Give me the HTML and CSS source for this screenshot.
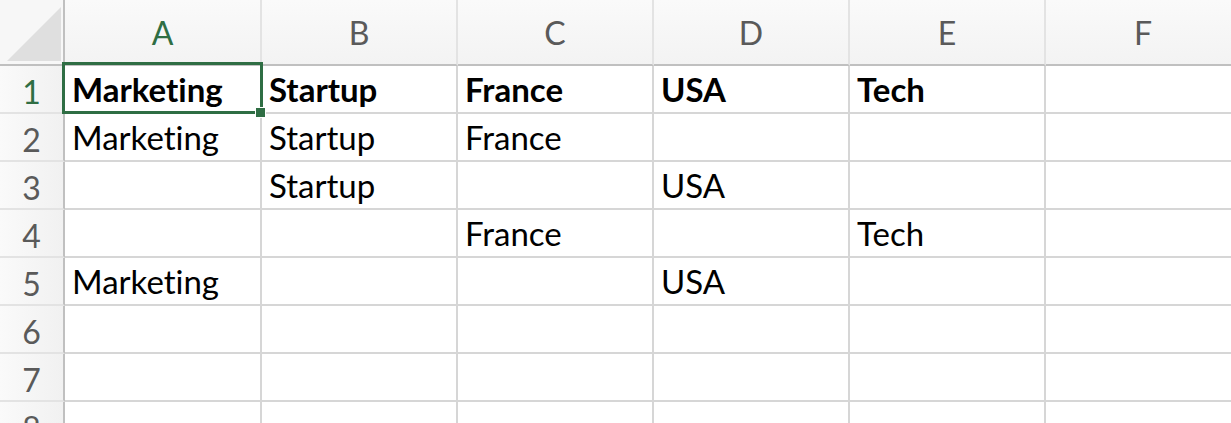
FILE: index.html
```html
<!DOCTYPE html>
<html lang="en">
<head>
<meta charset="utf-8">
<title>Sheet</title>
<link rel="stylesheet" href="styles.css">
</head>
<body>
<div class="sheet">
  <div class="grid">
    <div class="corner"><svg class="corner-tri" width="63" height="64" viewBox="0 0 63 64"><polygon points="7,61 61,61 61,7" fill="#dfdfdf"/></svg></div>
    <div class="colhead active">A</div>
    <div class="colhead">B</div>
    <div class="colhead">C</div>
    <div class="colhead">D</div>
    <div class="colhead">E</div>
    <div class="colhead">F</div>

    <div class="rowhead active">1</div>
    <div class="cell bold">Marketing</div>
    <div class="cell bold">Startup</div>
    <div class="cell bold">France</div>
    <div class="cell bold">USA</div>
    <div class="cell bold">Tech</div>
    <div class="cell"></div>

    <div class="rowhead">2</div>
    <div class="cell">Marketing</div>
    <div class="cell">Startup</div>
    <div class="cell">France</div>
    <div class="cell"></div>
    <div class="cell"></div>
    <div class="cell"></div>

    <div class="rowhead">3</div>
    <div class="cell"></div>
    <div class="cell">Startup</div>
    <div class="cell"></div>
    <div class="cell">USA</div>
    <div class="cell"></div>
    <div class="cell"></div>

    <div class="rowhead">4</div>
    <div class="cell"></div>
    <div class="cell"></div>
    <div class="cell">France</div>
    <div class="cell"></div>
    <div class="cell">Tech</div>
    <div class="cell"></div>

    <div class="rowhead">5</div>
    <div class="cell">Marketing</div>
    <div class="cell"></div>
    <div class="cell"></div>
    <div class="cell">USA</div>
    <div class="cell"></div>
    <div class="cell"></div>

    <div class="rowhead">6</div>
    <div class="cell"></div><div class="cell"></div><div class="cell"></div><div class="cell"></div><div class="cell"></div><div class="cell"></div>

    <div class="rowhead">7</div>
    <div class="cell"></div><div class="cell"></div><div class="cell"></div><div class="cell"></div><div class="cell"></div><div class="cell"></div>

    <div class="rowhead">8</div>
    <div class="cell"></div><div class="cell"></div><div class="cell"></div><div class="cell"></div><div class="cell"></div><div class="cell"></div>
  </div>
  <div class="selection"></div>
  <div class="handle"></div>
</div>
</body>
</html>
```

FILE: styles.css
```css
* { box-sizing: border-box; }
html, body {
  margin: 0;
  padding: 0;
  background: #ffffff;
  overflow: hidden;
}
body {
  width: 1231px;
  height: 423px;
  font-family: "Lato", "Open Sans", sans-serif;
  font-size: 33px;
  font-variant-ligatures: none;
  color: #000;
}
.sheet {
  position: relative;
  width: 1231px;
  height: 423px;
  overflow: hidden;
}
.grid {
  display: grid;
  grid-template-columns: 65px 197px repeat(5, 196px);
  grid-template-rows: 66px repeat(8, 48px);
}
.corner {
  background: #f7f7f7;
  border-right: 2px solid #c0c0c0;
  border-bottom: 2px solid #c0c0c0;
  display: flex;
}
.corner-tri { display: block; }
.colhead {
  background: linear-gradient(to bottom, #fafafa, #f3f3f3);
  border-right: 2px solid #e3e3e3;
  border-bottom: 2px solid #c0c0c0;
  color: #5a5a5a;
  font-size: 32px;
  display: flex;
  align-items: center;
  justify-content: center;
  padding-top: 0;
}
.rowhead {
  background: linear-gradient(to right, #fafafa, #f1f1f1);
  border-right: 2px solid #c0c0c0;
  border-bottom: 2px solid #e3e3e3;
  color: #5a5a5a;
  font-size: 32px;
  display: flex;
  align-items: center;
  justify-content: center;
  padding-top: 4px;
}
.active { color: #2f6e44; }
.cell {
  border-right: 2px solid #d6d6d6;
  border-bottom: 2px solid #d6d6d6;
  padding: 0 0 0 7px;
  line-height: 46px;
  white-space: nowrap;
  overflow: hidden;
}
.bold { font-weight: 700; }
.selection {
  position: absolute;
  left: 62px;
  top: 62px;
  width: 201px;
  height: 52px;
  border: 3px solid #2f6e44;
  pointer-events: none;
}
.handle {
  position: absolute;
  left: 255px;
  top: 107px;
  width: 11px;
  height: 11px;
  background: #2f6e44;
  border: 1px solid #ffffff;
}
```
